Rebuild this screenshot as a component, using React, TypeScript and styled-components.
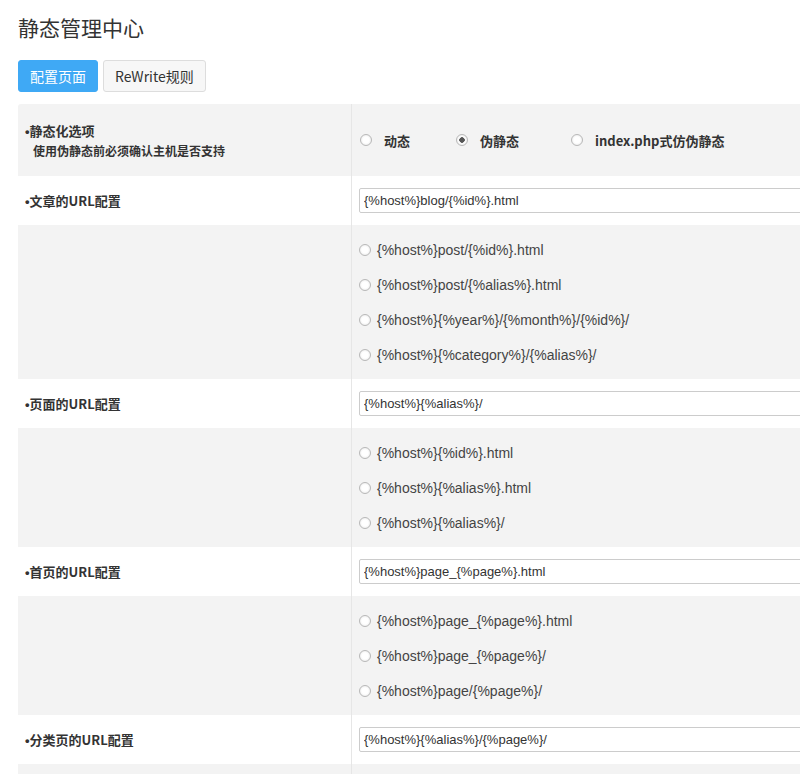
import React from 'react';
import styled, {createGlobalStyle} from 'styled-components';

const Global = createGlobalStyle`
  body {
    margin: 0;
    overflow: hidden;
    font-family: "Noto Sans CJK SC", "Microsoft YaHei", sans-serif;
    color: #333;
    font-size: 14px;
  }
`;

const Page = styled.div`
  padding: 0 0 0 18px;
  width: 1100px;
`;

const Title = styled.h1`
  margin: 0;
  padding-top: 12px;
  height: 36px;
  font-size: 21px;
  font-weight: normal;
  line-height: 30px;
`;

const Tabs = styled.div`
  display: flex;
  gap: 5px;
  margin: 12px 0 12px;
`;

const Tab = styled.button<{$active?: boolean}>`
  height: 32px;
  padding: 0 11px;
  font-family: "Noto Sans CJK SC", sans-serif;
  font-size: 14px;
  border-radius: 3px;
  border: 1px solid ${p => (p.$active ? '#3fa9f5' : '#ddd')};
  background: ${p => (p.$active ? '#3fa9f5' : '#f7f7f7')};
  color: ${p => (p.$active ? '#fff' : '#333')};
`;

const Table = styled.div`
  display: grid;
  grid-template-columns: 333px 1fr;
  border-radius: 3px 0 0 0;
  overflow: hidden;
`;

const Cell = styled.div<{$gray?: boolean; $h: number}>`
  background: ${p => (p.$gray ? '#f3f3f3' : '#fff')};
  min-height: ${p => p.$h}px;
  display: flex;
  flex-direction: column;
  justify-content: center;
`;

const LabelCell = styled(Cell)`
  padding-left: 7px;
  font-weight: bold;
  font-size: 13px;
`;

const ValueCell = styled(Cell)`
  border-left: 1px solid #e6e6e6;
  padding-left: 7px;
`;

const Bullet = styled.span`
  font-family: "Liberation Sans", sans-serif;
`;

const Sub = styled.div`
  padding-left: 8px;
  font-size: 12px;
  font-weight: bold;
  margin-top: 2px;
`;

const ModeRow = styled.div`
  display: flex;
  align-items: center;
  font-weight: bold;
  font-size: 13px;
  margin-left: -11px;
`;

const Mode = styled.label<{$gap: number}>`
  display: flex;
  align-items: center;
  margin-right: ${p => p.$gap}px;
  span { margin-left: 12px; }
`;

const Radio = styled.span<{$on?: boolean}>`
  width: 12px;
  height: 12px;
  border-radius: 50%;
  box-sizing: border-box;
  border: 1px solid #b8b8b8;
  background: radial-gradient(circle, ${p => (p.$on ? '#555 0 2.5px,' : '')} #fff 3px, #e2e2e2 100%);
  flex: none;
`;

const Input = styled.input`
  box-sizing: border-box;
  height: 25px;
  width: 700px;
  border: 1px solid #ccc;
  border-radius: 2px;
  padding: 0 4px;
  font-family: "Liberation Sans", Arial, sans-serif;
  font-size: 13px;
  color: #333;
`;

const Option = styled.div`
  height: 35px;
  display: flex;
  align-items: center;
  gap: 6px;
  font-family: "Liberation Sans", Arial, sans-serif;
  font-size: 14px;
  color: #444;
`;

const sections = [
  {label: '文章的URL配置', value: '{%host%}blog/{%id%}.html', opts: ['{%host%}post/{%id%}.html', '{%host%}post/{%alias%}.html', '{%host%}{%year%}/{%month%}/{%id%}/', '{%host%}{%category%}/{%alias%}/']},
  {label: '页面的URL配置', value: '{%host%}{%alias%}/', opts: ['{%host%}{%id%}.html', '{%host%}{%alias%}.html', '{%host%}{%alias%}/']},
  {label: '首页的URL配置', value: '{%host%}page_{%page%}.html', opts: ['{%host%}page_{%page%}.html', '{%host%}page_{%page%}/', '{%host%}page/{%page%}/']},
  {label: '分类页的URL配置', value: '{%host%}{%alias%}/{%page%}/', opts: ['{%host%}{%alias%}_{%page%}.html']},
];

const App: React.FC = () => (
  <Page>
    <Global/>
    <Title>静态管理中心</Title>
    <Tabs>
      <Tab $active>配置页面</Tab>
      <Tab>ReWrite规则</Tab>
    </Tabs>
    <Table>
      <LabelCell $gray $h={72}>
        <div><Bullet>•</Bullet>静态化选项</div>
        <Sub>使用伪静态前必须确认主机是否支持</Sub>
      </LabelCell>
      <ValueCell $gray $h={72}>
        <ModeRow>
          <Mode $gap={34}><Radio/><span>动态</span></Mode>
          <Mode $gap={40}><Radio $on/><span>伪静态</span></Mode>
          <Mode $gap={0}><Radio/><span>index.php式仿伪静态</span></Mode>
        </ModeRow>
      </ValueCell>
      {sections.map(s => (
        <React.Fragment key={s.label}>
          <LabelCell $h={49}><div><Bullet>•</Bullet>{s.label}</div></LabelCell>
          <ValueCell $h={49}><Input defaultValue={s.value}/></ValueCell>
          <LabelCell $gray $h={s.opts.length * 35 + 14}/>
          <ValueCell $gray $h={s.opts.length * 35 + 14}>
            {s.opts.map(o => (
              <Option key={o}><Radio/>{o}</Option>
            ))}
          </ValueCell>
        </React.Fragment>
      ))}
    </Table>
  </Page>
);

export default App;
